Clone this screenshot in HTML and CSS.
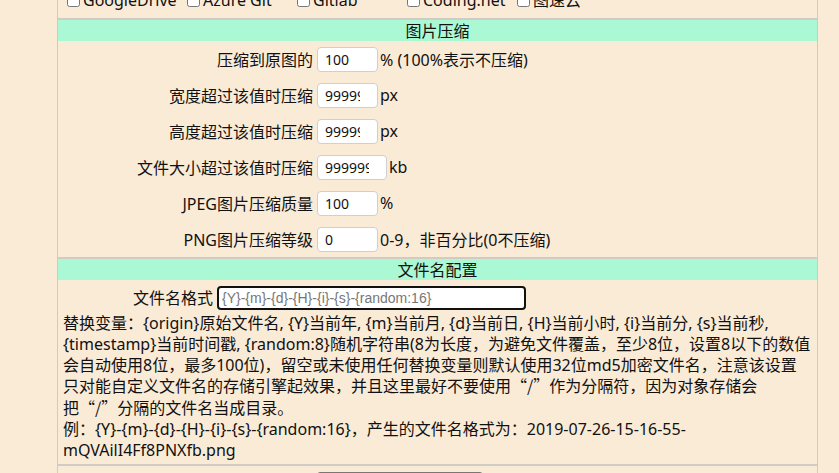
FILE: index.html
```html
<!DOCTYPE html>
<html lang="zh-CN">
<head>
<meta charset="utf-8">
<title>设置</title>
<link rel="stylesheet" href="styles.css">
</head>
<body>
<div class="panel">
  <div class="checks">
    <label class="check first"><input type="checkbox">GoogleDrive</label>
    <label class="check"><input type="checkbox">Azure Git</label>
    <label class="check"><input type="checkbox">Gitlab</label>
    <label class="check"><input type="checkbox">Coding.net</label>
    <label class="check"><input type="checkbox">图速云</label>
  </div>

  <div class="section-title">图片压缩</div>
  <div class="form-grid">
    <div class="label">压缩到原图的</div>
    <div class="field"><input class="num" type="number" value="100"><span class="suffix">% (100%表示不压缩)</span></div>
    <div class="label">宽度超过该值时压缩</div>
    <div class="field"><input class="num" type="number" value="99999999"><span class="suffix">px</span></div>
    <div class="label">高度超过该值时压缩</div>
    <div class="field"><input class="num" type="number" value="99999999"><span class="suffix">px</span></div>
    <div class="label">文件大小超过该值时压缩</div>
    <div class="field"><input class="num wide" type="number" value="99999999"><span class="suffix">kb</span></div>
    <div class="label">JPEG图片压缩质量</div>
    <div class="field"><input class="num" type="number" value="100"><span class="suffix">%</span></div>
    <div class="label">PNG图片压缩等级</div>
    <div class="field"><input class="num" type="number" value="0"><span class="suffix">0-9，非百分比(0不压缩)</span></div>
  </div>

  <div class="section-title">文件名配置</div>
  <div class="name-section">
    <div class="name-row">
      <div class="name-label">文件名格式</div>
      <input class="name-input" type="text" placeholder="{Y}-{m}-{d}-{H}-{i}-{s}-{random:16}">
    </div>
    <p class="help">替换变量：{origin}原始文件名, {Y}当前年, {m}当前月, {d}当前日, {H}当前小时, {i}当前分, {s}当前秒, {timestamp}当前时间戳, {random:8}随机字符串(8为长度，为避免文件覆盖，至少8位，设置8以下的数值会自动使用8位，最多100位)，留空或未使用任何替换变量则默认使用32位md5加密文件名，注意该设置只对能自定义文件名的存储引擎起效果，并且这里最好不要使用<span class="cjk">“/”</span>作为分隔符，因为对象存储会<span class="keep">把<span class="cjk">“/”</span>分隔</span>的文件名当成目录。<br>例：{Y}-{m}-{d}-{H}-{i}-{s}-{random:16}，产生的文件名格式为：2019-07-26-15-16-55-mQVAilI4Ff8PNXfb.png</p>
  </div>

  <div class="actions">
    <button class="save" type="button">保存设置</button>
  </div>
</div>
</body>
</html>
```
FILE: styles.css
```css
html, body {
  margin: 0;
  padding: 0;
  background: #faebd7;
  height: 100%;
  overflow: hidden;
}

body {
  font-family: "Noto Sans", "Noto Sans CJK SC", sans-serif;
  font-size: 16px;
  color: #111;
}

.panel {
  margin: -18px 0 0 57px;
  width: 759px;
  border-left: 1px solid #cfcac4;
  border-right: 1px solid #cfcac4;
  background: #faebd7;
}

.checks {
  height: 36px;
  display: flex;
  align-items: center;
  padding-left: 5px;
}

.check {
  display: inline-flex;
  align-items: center;
  min-width: 110px;
  line-height: 20px;
  white-space: nowrap;
}

.check.first {
  min-width: 120px;
}

.check input {
  margin: 3px 3px 3px 4px;
  width: 13px;
  height: 13px;
}

.section-title {
  border-top: 2px solid #d0cbc5;
  background: #abf8d4;
  height: 21px;
  line-height: 21px;
  text-align: center;
  font-family: "Noto Sans CJK SC", sans-serif;
}

.form-grid {
  display: grid;
  grid-template-columns: 255px 1fr;
  grid-auto-rows: 36px;
  column-gap: 4px;
}

.label {
  display: flex;
  align-items: center;
  justify-content: flex-end;
  white-space: nowrap;
}

.field {
  display: flex;
  align-items: center;
}

.num {
  box-sizing: border-box;
  width: 61px;
  height: 25px;
  border: 1px solid #cfcfcf;
  border-radius: 4px;
  background: #fff;
  padding: 0 2px 0 7px;
  font-family: "Noto Sans", sans-serif;
  font-size: 14px;
  color: #111;
  margin: 0;
}

.num.wide {
  width: 70px;
}

.suffix {
  margin-left: 2px;
  white-space: nowrap;
}

.name-section {
  padding: 0 5px 3px 5px;
}

.name-row {
  display: flex;
  align-items: flex-start;
  padding-top: 6px;
  height: 27px;
}

.name-label {
  width: 150px;
  height: 24px;
  line-height: 24px;
  text-align: right;
  margin-right: 4px;
}

.name-input {
  box-sizing: border-box;
  width: 309px;
  height: 24px;
  margin: 0;
  border: 2px solid #111;
  border-radius: 4px;
  background: #fff;
  padding: 0 3px;
  font-family: "Liberation Sans", Arial, sans-serif;
  font-size: 14px;
  outline: none;
}

.name-input::placeholder {
  color: #777;
}

.help {
  margin: 0;
  line-height: 20.8px;
}

.cjk {
  font-family: "Noto Sans CJK SC", sans-serif;
}

.keep {
  white-space: nowrap;
}

.actions {
  border-top: 2px solid #d0cbc5;
  padding: 6px 0 10px 259px;
}

.save {
  width: 166px;
  height: 30px;
  border: 1px solid #777;
  border-radius: 3px;
  background: #efefef;
  font-family: "Noto Sans CJK SC", sans-serif;
  font-size: 14px;
}
```
